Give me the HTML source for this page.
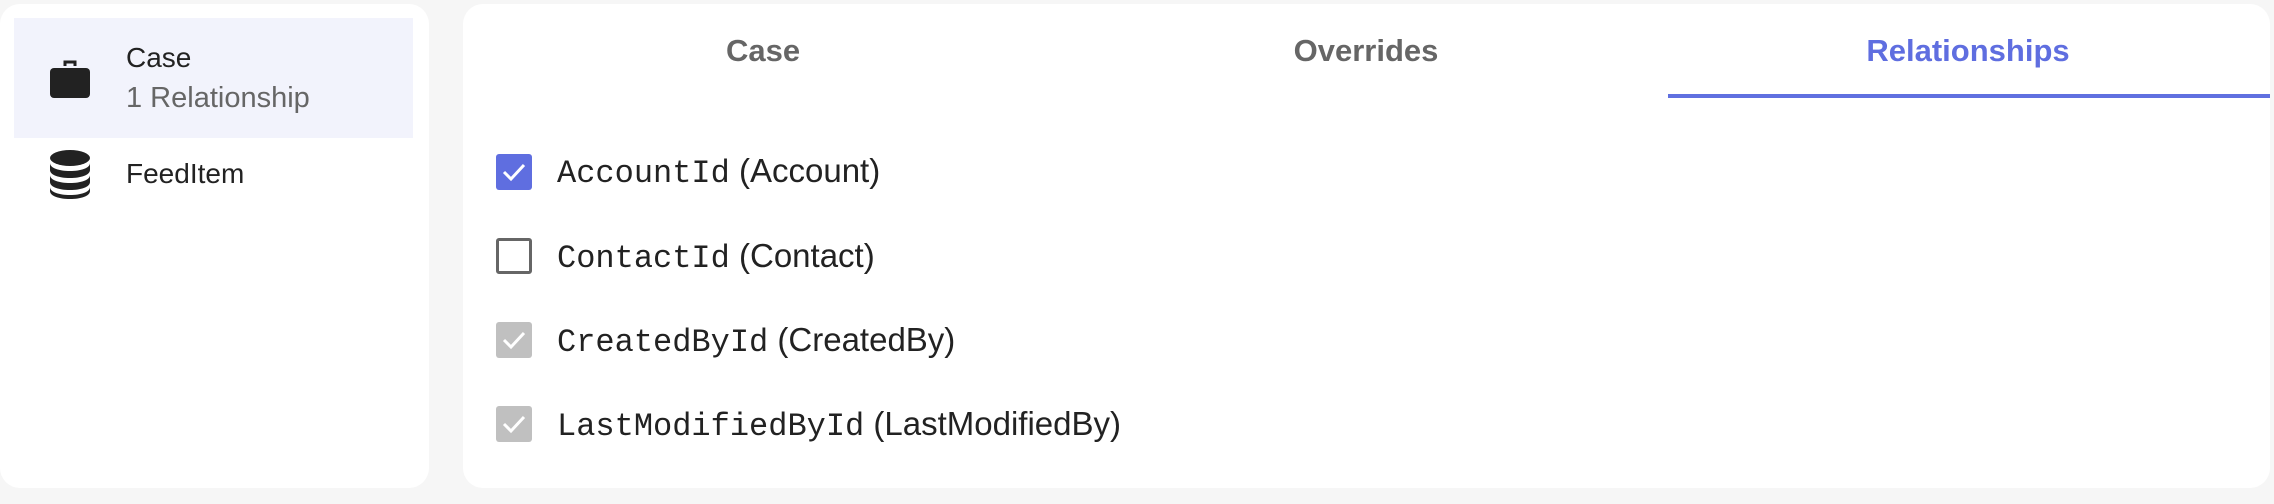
<!DOCTYPE html>
<html><head><meta charset="utf-8"><style>
*{margin:0;padding:0;box-sizing:border-box}
body{width:2274px;height:504px;background:#f6f6f6;position:relative;overflow:hidden;font-family:"Liberation Sans",sans-serif;color:#222}
.lp{position:absolute;left:0;top:4px;width:429px;height:484px;background:#fff;border-radius:20px}
.sel{position:absolute;left:14px;top:18px;width:399px;height:120px;background:#f2f3fc}
.t1{position:absolute;left:126px;font-size:28px;color:#222}
.t2{position:absolute;left:126px;font-size:29px;color:#666}
.rp{position:absolute;left:463px;top:4px;width:1807px;height:484px;background:#fff;border-radius:20px}
.tab{position:absolute;top:33px;font-size:31px;font-weight:bold;color:#666;transform:translateX(-50%)}
.ul{position:absolute;left:1668px;top:94px;width:602px;height:4px;background:#6070e0}
.cb{position:absolute;left:496px;width:36px;height:36px;border-radius:3px}
.lb{position:absolute;left:557px;font-size:33px;color:#222;white-space:nowrap}
.lb code{font-family:"Liberation Mono",monospace;font-size:32px}
</style></head><body>
<div class="lp"></div>
<div class="sel"></div>
<svg style="position:absolute;left:49px;top:56px" width="42" height="44" viewBox="0 0 42 44"><path d="M16 10V6h10v4" fill="none" stroke="#222" stroke-width="3"/><rect x="1" y="12" width="40" height="30" rx="4" fill="#222"/></svg>
<div class="t1" style="top:42px">Case</div>
<div class="t2" style="top:82px">1 Relationship</div>
<svg style="position:absolute;left:49px;top:150px" width="42" height="50" viewBox="0 0 42 50"><ellipse cx="21" cy="8" rx="20" ry="8" fill="#222"/><path d="M1 13c0 5 9 8 20 8s20-3 20-8v7c0 5-9 8-20 8S1 25 1 20z" fill="#222"/><path d="M1 25c0 5 9 8 20 8s20-3 20-8v7c0 5-9 8-20 8S1 37 1 32z" fill="#222"/><path d="M1 37c0 5 9 8 20 8s20-3 20-8v4c0 5-9 8-20 8S1 46 1 41z" fill="#222"/></svg>
<div class="t1" style="top:158px">FeedItem</div>
<div class="rp"></div>
<div class="tab" style="left:763px">Case</div>
<div class="tab" style="left:1366px">Overrides</div>
<div class="tab" style="left:1968px;color:#5f6ee0">Relationships</div>
<div class="ul"></div>
<div class="cb" style="top:154px;background:#5f6ee0"></div>
<svg style="position:absolute;left:496px;top:154px" width="36" height="36"><path d="M8 18l7 7 13-14" fill="none" stroke="#fff" stroke-width="3"/></svg>
<div class="lb" style="top:152px"><code>AccountId</code> (Account)</div>
<div class="cb" style="top:238px;border:3px solid #666"></div>
<div class="lb" style="top:237px"><code>ContactId</code> (Contact)</div>
<div class="cb" style="top:322px;background:#c0c0c0"></div>
<svg style="position:absolute;left:496px;top:322px" width="36" height="36"><path d="M8 18l7 7 13-14" fill="none" stroke="#fff" stroke-width="3"/></svg>
<div class="lb" style="top:321px"><code>CreatedById</code> (CreatedBy)</div>
<div class="cb" style="top:406px;background:#c0c0c0"></div>
<svg style="position:absolute;left:496px;top:406px" width="36" height="36"><path d="M8 18l7 7 13-14" fill="none" stroke="#fff" stroke-width="3"/></svg>
<div class="lb" style="top:405px"><code>LastModifiedById</code> (LastModifiedBy)</div>
</body></html>
